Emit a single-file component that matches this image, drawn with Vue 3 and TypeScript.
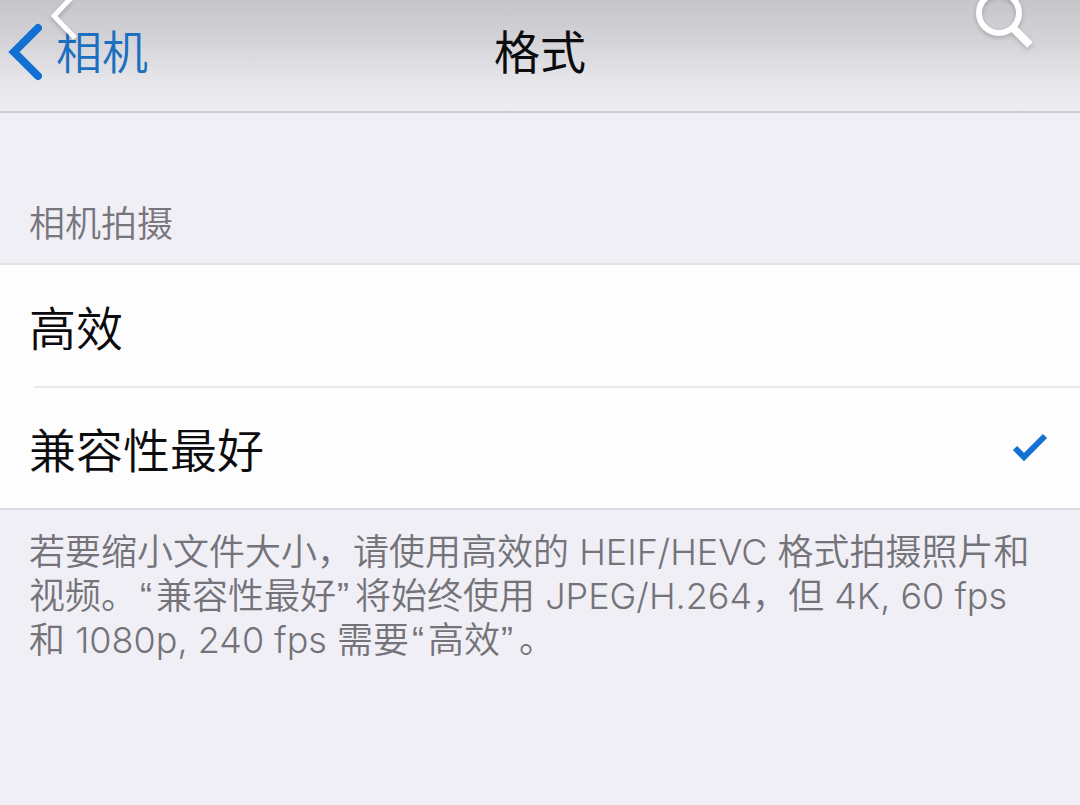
<script setup lang="ts">
import { ref } from 'vue'

interface FormatOption {
  value: string
  label: string
}

const options: FormatOption[] = [
  { value: 'efficient', label: '高效' },
  { value: 'compatible', label: '兼容性最好' },
]

const selected = ref<string>('compatible')
</script>

<template>
  <div class="screen">
    <header class="navbar">
      <a class="back" href="#camera">
        <svg class="back-icon" viewBox="0 0 34 58" aria-hidden="true">
          <path d="M30 5 L6 29 L30 53" />
        </svg>
        <span>相机</span>
      </a>
      <h1 class="title">格式</h1>
    </header>

    <button class="overlay overlay-back" type="button" aria-label="返回">
      <svg viewBox="0 0 30 44" aria-hidden="true">
        <path d="M22 -3 L4 16 L25 38" />
      </svg>
    </button>
    <button class="overlay overlay-search" type="button" aria-label="搜索">
      <svg viewBox="0 0 64 56" aria-hidden="true">
        <circle cx="27" cy="13" r="20" />
        <path class="handle" d="M41 28 L58 45" />
      </svg>
    </button>

    <main>
      <fieldset class="group">
        <legend class="group-title">相机拍摄</legend>
        <div class="rows">
          <label v-for="option in options" :key="option.value" class="row">
            <input v-model="selected" class="radio" type="radio" name="format" :value="option.value" />
            <span>{{ option.label }}</span>
            <svg v-if="selected === option.value" class="check" viewBox="0 0 36 28" aria-hidden="true">
              <path d="M3 15 L12 24 L33 3" />
            </svg>
          </label>
        </div>
      </fieldset>
      <p class="note">
        若要缩小文件大小，请使用高效的 HEIF/HEVC 格式拍摄照片和视频。<span class="quote open">“</span>兼容性最好<span class="quote close">”</span>将始终使用 JPEG/H.264，但 4K, 60 fps 和 1080p, 240 fps 需要<span class="quote open">“</span>高效<span class="quote close">”</span>。
      </p>
    </main>
  </div>
</template>

<style>
body {
  margin: 0;
  background: #f0eff6;
}
</style>

<style scoped>
.screen {
  position: relative;
  min-height: 100vh;
  overflow: hidden;
  background: #f0eff6;
  color: #0c0c0e;
  font-family: Inter, "Noto Sans CJK SC", sans-serif;
  font-weight: 350;
}

.navbar {
  display: grid;
  grid-template-columns: 1fr auto 1fr;
  align-items: center;
  box-sizing: border-box;
  height: 113px;
  padding: 0 8px 8px;
  border-bottom: 2px solid #cdccd2;
  background: linear-gradient(#c6c5ca, #d3d2d7 35%, #e5e4e9 70%, #efeef4);
}

.back {
  display: flex;
  align-items: center;
  gap: 14px;
  color: #1b6fc0;
  font-size: 46px;
  line-height: 60px;
  text-decoration: none;
}

.back-icon {
  width: 34px;
  height: 58px;
  fill: none;
  stroke: #1170d2;
  stroke-width: 8;
  stroke-linecap: round;
}

.title {
  margin: 0;
  font-size: 46px;
  font-weight: 400;
  line-height: 60px;
}

.overlay {
  position: absolute;
  top: 0;
  padding: 0;
  border: 0;
  background: none;
}

.overlay svg {
  display: block;
  width: 100%;
  height: 100%;
  fill: none;
  stroke: #fff;
  filter: drop-shadow(0 2px 2px rgba(0, 0, 0, 0.2));
}

.overlay-back {
  left: 50px;
  width: 30px;
  height: 44px;
}

.overlay-back svg {
  stroke-width: 5;
}

.overlay-search {
  right: 44px;
  width: 64px;
  height: 56px;
}

.overlay-search svg {
  overflow: visible;
  stroke-width: 6;
}

.handle {
  stroke-width: 8;
}

.group {
  min-width: 0;
  margin: 0;
  padding: 0;
  border: 0;
}

.group-title {
  padding: 87px 29px 15px;
  color: #77767c;
  font-size: 36px;
  line-height: 48px;
}

.rows {
  border-top: 2px solid #e2e1e6;
  border-bottom: 2px solid #dddbe0;
  background: #fefdfe;
}

.row {
  position: relative;
  display: flex;
  align-items: center;
  justify-content: space-between;
  height: 121px;
  padding: 0 32px 0 29px;
  font-size: 47px;
}

.row + .row {
  height: 122px;
}

.row + .row::before {
  position: absolute;
  top: 0;
  right: 0;
  left: 34px;
  height: 2px;
  background: #e9e8ec;
  content: "";
}

.radio {
  position: absolute;
  opacity: 0;
}

.check {
  width: 36px;
  height: 28px;
  fill: none;
  stroke: #1271d3;
  stroke-width: 6;
}

.note {
  margin: 0;
  padding: 20px 42px 0 29px;
  color: #747379;
  font-size: 36px;
  line-height: 44px;
}

.quote {
  font-family: "Liberation Sans", sans-serif;
  line-height: 1;
}

.open {
  margin: 0 4px 0 3px;
}

.close {
  margin: 0 6px 0 1px;
}
</style>
